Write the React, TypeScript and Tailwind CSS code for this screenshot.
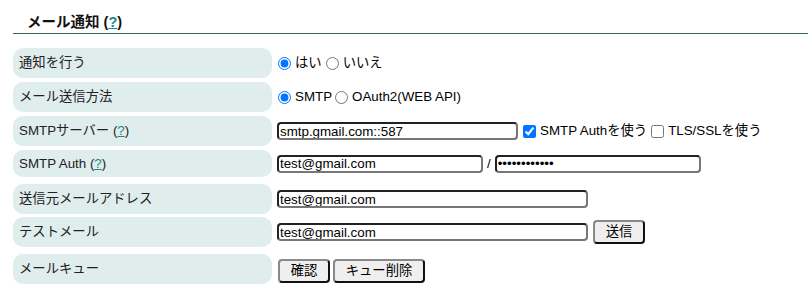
import React from "react";

const font = { fontFamily: '"Liberation Sans", Arial, "Noto Sans CJK JP", sans-serif' };

const inputCls =
  "h-[18px] border-2 border-[#222] border-b-[#777] border-r-[#777] rounded-[4px] bg-white px-[1px] text-[13.33px] leading-[14px] text-black outline-none";
const btnCls =
  "h-[24px] border-2 border-[#888] border-b-[#111] border-r-[#111] rounded-[4px] bg-[#efefef] text-[13.33px] text-black";

function Help() {
  return (
    <>
      (<span className="text-[#1a8a8a] underline">?</span>)
    </>
  );
}

function Row({ label, h = 30, mt, children }: { label: React.ReactNode; h?: number; mt: string; children: React.ReactNode }) {
  return (
    <div className={`flex ${mt}`} style={{ height: h }}>
      <div className="w-[259px] shrink-0 rounded-[10px] bg-[#e0eded] pl-[6px] flex items-center text-[13.33px] text-[#222]">
        {label}
      </div>
      <div className="ml-[5px] flex items-center text-[13.33px] text-black">{children}</div>
    </div>
  );
}

export default function App() {
  return (
    <div className="w-[808px] h-[292px] bg-white pl-[13px] pt-[10px]" style={font}>
      <div className="border-b-[1.5px] border-[#2f6262] h-[24px] pl-[14px]">
        <span className="text-[14.5px] font-bold text-[#111] leading-[20px]">
          メール通知 <Help />
        </span>
      </div>
      <Row label="通知を行う" mt="mt-[14px]">
        <input type="radio" name="n" defaultChecked className="w-[13px] h-[13px] ml-[1px] mr-[4px] accent-[#0075ff]" />
        <span>はい</span>
        <input type="radio" name="n" className="w-[13px] h-[13px] ml-[4px] mr-[4px]" />
        <span>いいえ</span>
      </Row>
      <Row label="メール送信方法" mt="mt-[4px]">
        <input type="radio" name="m" defaultChecked className="w-[13px] h-[13px] ml-[1px] mr-[4px] accent-[#0075ff]" />
        <span>SMTP</span>
        <input type="radio" name="m" className="w-[13px] h-[13px] ml-[3px] mr-[4px]" />
        <span>OAuth2(WEB API)</span>
      </Row>
      <Row label={<span>SMTPサーバー <Help /></span>} mt="mt-[4px]">
        <input className={`${inputCls} w-[241px]`} defaultValue="smtp.gmail.com::587" />
        <input type="checkbox" defaultChecked className="w-[13px] h-[13px] ml-[5px] mr-[4px] accent-[#0075ff]" />
        <span>SMTP Authを使う</span>
        <input type="checkbox" className="w-[13px] h-[13px] ml-[4px] mr-[4px]" />
        <span>TLS/SSLを使う</span>
      </Row>
      <Row label={<span>SMTP Auth <Help /></span>} h={27} mt="mt-[4px]">
        <input className={`${inputCls} w-[206px]`} defaultValue="test@gmail.com" />
        <span className="mx-[4px]">/</span>
        <input type="password" className={`${inputCls} w-[206px]`} defaultValue="abcdefghijkl" />
      </Row>
      <Row label="送信元メールアドレス" mt="mt-[7px]">
        <input className={`${inputCls} w-[311px]`} defaultValue="test@gmail.com" />
      </Row>
      <Row label="テストメール" mt="mt-[3px]">
        <input className={`${inputCls} w-[311px]`} defaultValue="test@gmail.com" />
        <button className={`${btnCls} w-[52px] ml-[5px]`}>送信</button>
      </Row>
      <Row label="メールキュー" mt="mt-[7px]">
        <button className={`${btnCls} w-[52px] h-[23px] mt-[3px] ml-[1px]`}>確認</button>
        <button className={`${btnCls} w-[92px] h-[23px] mt-[3px] ml-[3px]`}>キュー削除</button>
      </Row>
    </div>
  );
}
